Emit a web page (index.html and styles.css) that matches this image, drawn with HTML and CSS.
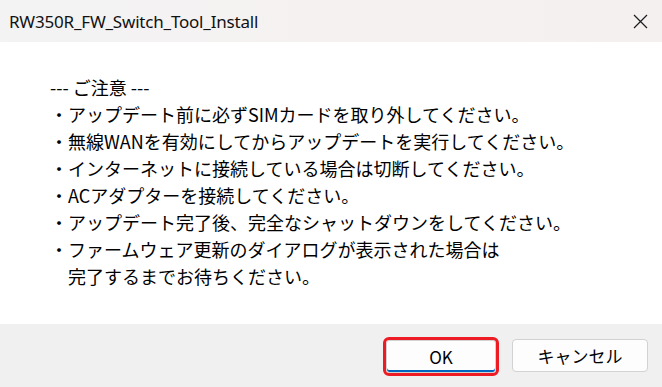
FILE: index.html
```html
<!DOCTYPE html>
<html lang="ja">
<head>
  <meta charset="UTF-8">
  <title>RW350R_FW_Switch_Tool_Install</title>
  <link rel="stylesheet" href="styles.css">
</head>
<body>
  <div class="dialog">
    <header class="titlebar">
      <span class="title">RW350R_FW_Switch_Tool_Install</span>
      <button class="close" aria-label="閉じる">
        <svg width="15" height="15" viewBox="0 0 15 15">
          <path d="M1 1L14 14M14 1L1 14" stroke="#1b1b1b" stroke-width="1.2" fill="none"/>
        </svg>
      </button>
    </header>

    <main class="content">
      <p class="note-head">--- ご注意 ---</p>
      <ul class="notes">
        <li>アップデート前に必ずSIMカードを取り外してください。</li>
        <li>無線WANを有効にしてからアップデートを実行してください。</li>
        <li>インターネットに接続している場合は切断してください。</li>
        <li>ACアダプターを接続してください。</li>
        <li>アップデート完了後、完全なシャットダウンをしてください。</li>
        <li>ファームウェア更新のダイアログが表示された場合は<br>完了するまでお待ちください。</li>
      </ul>
    </main>

    <footer class="actions">
      <button class="btn btn-ok">OK</button>
      <button class="btn btn-cancel">キャンセル</button>
    </footer>
  </div>
</body>
</html>
```

FILE: styles.css
```css
* {
  margin: 0;
  padding: 0;
  box-sizing: border-box;
}

body {
  width: 662px;
  height: 387px;
  background: #ffffff;
  color: #000000;
  font-family: 'Noto Sans CJK JP', sans-serif;
  overflow: hidden;
}

.dialog {
  display: flex;
  flex-direction: column;
  height: 387px;
}

/* Title bar */
.titlebar {
  height: 42px;
  display: flex;
  align-items: center;
  justify-content: space-between;
  padding: 0 14px 0 9px;
  background: linear-gradient(90deg, #f3f3f3, #f6f1f1 60%, #f4f0f0);
}

.title {
  font-family: 'Noto Sans', sans-serif;
  font-size: 17px;
  color: #111111;
  letter-spacing: -0.2px;
}

.close {
  border: none;
  background: none;
  width: 15px;
  height: 15px;
  display: flex;
}

/* Message */
.content {
  flex: 1;
  padding: 32px 0 0 50px;
  font-size: 18px;
  line-height: 27px;
}

.notes {
  list-style: none;
}

.notes li {
  padding-left: 18px;
  position: relative;
}

.notes li::before {
  content: "・";
  position: absolute;
  left: 0;
}

/* Buttons */
.actions {
  height: 63px;
  background: #f0f0f0;
  display: flex;
  align-items: center;
  justify-content: flex-end;
  gap: 16px;
  padding: 0 14px 0 0;
}

.btn {
  height: 33px;
  border: 1px solid #d2d2d2;
  border-radius: 4px;
  background: #fdfdfd;
  font-family: 'Noto Sans CJK JP', sans-serif;
  font-size: 17px;
  color: #000000;
}

.btn-ok {
  width: 110px;
  box-shadow: inset 0 -2px 0 #0067c0;
  outline: 3px solid #ed1c24;
  outline-offset: 0;
  border-radius: 3px;
  margin-top: 1px;
}

.btn-cancel {
  width: 136px;
}
```
